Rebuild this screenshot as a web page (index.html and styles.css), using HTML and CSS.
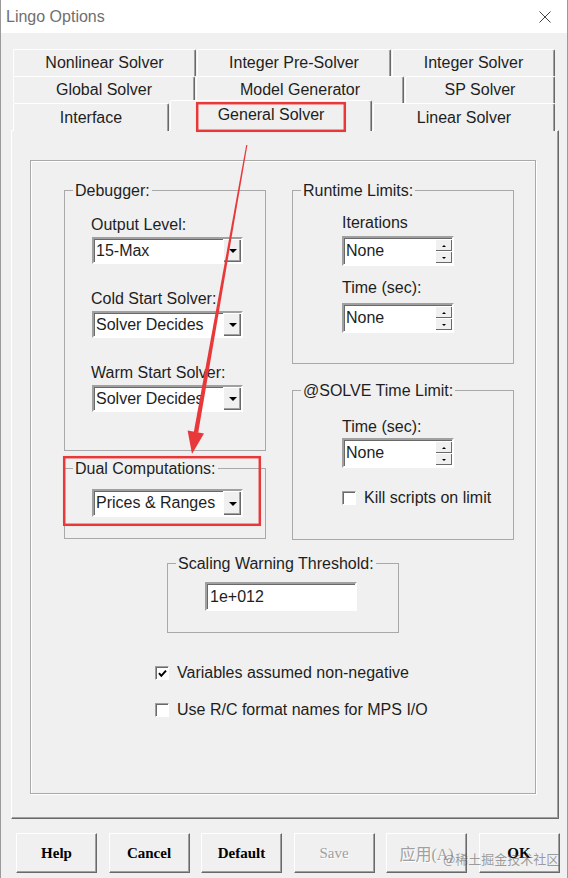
FILE: index.html
```html
<!DOCTYPE html>
<html lang="en">
<head>
    <meta charset="UTF-8">
    <meta name="viewport" content="width=device-width, initial-scale=1.0">
    <title>Lingo Options</title>
    <link rel="stylesheet" href="styles.css">
</head>
<body>

<div class="dialog">
    <div class="titlebar">
        <span class="title">Lingo Options</span>
        <svg class="close" width="12" height="12" viewBox="0 0 12 12">
            <path d="M0.5 0.5L11.5 11.5M11.5 0.5L0.5 11.5" stroke="#444" stroke-width="1" fill="none"/>
        </svg>
    </div>

    <div class="tabs">
        <div class="tab-row row1">
            <div class="tab">Nonlinear Solver</div>
            <div class="tab">Integer Pre-Solver</div>
            <div class="tab">Integer Solver</div>
        </div>
        <div class="tab-row row2">
            <div class="tab">Global Solver</div>
            <div class="tab">Model Generator</div>
            <div class="tab">SP Solver</div>
        </div>
        <div class="tab-row row3">
            <div class="tab">Interface</div>
            <div class="tab active">General Solver</div>
            <div class="tab">Linear Solver</div>
        </div>
    </div>

    <div class="panel">
        <div class="frame">
            <div class="columns">
                <div class="col">
                    <fieldset class="group debugger">
                        <legend>Debugger:</legend>
                        <div class="dbg-item">
                            <span class="label">Output Level:</span>
                            <div class="combo"><span class="combo-text">15-Max</span><span class="combo-btn"><i class="tri-down"></i></span></div>
                        </div>
                        <div class="dbg-item">
                            <span class="label">Cold Start Solver:</span>
                            <div class="combo"><span class="combo-text">Solver Decides</span><span class="combo-btn"><i class="tri-down"></i></span></div>
                        </div>
                        <div class="dbg-item">
                            <span class="label">Warm Start Solver:</span>
                            <div class="combo"><span class="combo-text">Solver Decides</span><span class="combo-btn"><i class="tri-down"></i></span></div>
                        </div>
                    </fieldset>

                    <fieldset class="group dual">
                        <legend>Dual Computations:</legend>
                        <div class="combo"><span class="combo-text">Prices &amp; Ranges</span><span class="combo-btn"><i class="tri-down"></i></span></div>
                    </fieldset>
                </div>

                <div class="col">
                    <fieldset class="group runtime">
                        <legend>Runtime Limits:</legend>
                        <span class="label">Iterations</span>
                        <div class="spin first">
                            <span class="spin-text">None</span>
                            <span class="spin-btns"><span class="spin-btn"><i class="tri-up-s"></i></span><span class="spin-btn"><i class="tri-down-s"></i></span></span>
                        </div>
                        <span class="label gap">Time (sec):</span>
                        <div class="spin second">
                            <span class="spin-text">None</span>
                            <span class="spin-btns"><span class="spin-btn"><i class="tri-up-s"></i></span><span class="spin-btn"><i class="tri-down-s"></i></span></span>
                        </div>
                    </fieldset>

                    <fieldset class="group solve">
                        <legend>@SOLVE Time Limit:</legend>
                        <span class="label">Time (sec):</span>
                        <div class="spin tight">
                            <span class="spin-text">None</span>
                            <span class="spin-btns"><span class="spin-btn"><i class="tri-up-s"></i></span><span class="spin-btn"><i class="tri-down-s"></i></span></span>
                        </div>
                        <div class="check-row kill">
                            <span class="check"></span>
                            <span>Kill scripts on limit</span>
                        </div>
                    </fieldset>
                </div>
            </div>

            <fieldset class="group scaling">
                <legend>Scaling Warning Threshold:</legend>
                <div class="textbox">1e+012</div>
            </fieldset>

            <div class="check-row opt first-opt">
                <span class="check checked">
                    <svg width="11" height="11" viewBox="0 0 11 11"><path d="M2 5.2L4.3 7.8L9 2.6" stroke="#000" stroke-width="2" fill="none"/></svg>
                </span>
                <span>Variables assumed non-negative</span>
            </div>
            <div class="check-row opt">
                <span class="check"></span>
                <span>Use R/C format names for MPS I/O</span>
            </div>
        </div>
    </div>

    <div class="buttons">
        <button class="btn">Help</button>
        <button class="btn">Cancel</button>
        <button class="btn">Default</button>
        <button class="btn disabled">Save</button>
        <button class="btn disabled cjk">应用(A)</button>
        <button class="btn">OK</button>
    </div>

    <!-- annotations drawn on top of the screenshot -->
    <svg class="annot" width="568" height="878" viewBox="0 0 568 878">
        <rect x="197.2" y="103.2" width="147.6" height="27.6" fill="none" stroke="#e8383a" stroke-width="2.5"/>
        <rect x="64.2" y="457.2" width="195.6" height="67.6" fill="none" stroke="#e8383a" stroke-width="2.5"/>
        <polygon points="247.4,145 246.2,145 193.8,432 198.2,432.8" fill="#e8383a"/>
        <polygon points="187.6,430.6 204,433.6 192,454" fill="#e8383a"/>
    </svg>
    <div class="watermark">@稀土掘金技术社区</div>
</div>

</body>
</html>
```

FILE: styles.css
```css
* {
    box-sizing: border-box;
}

body {
    margin: 0;
    background: #f0f0f0;
    font-family: "Liberation Sans", Arial, sans-serif;
    font-size: 16px;
    color: #1e1e1e;
}

.dialog {
    position: relative;
    width: 568px;
    height: 878px;
    background: #f0f0f0;
    border-left: 1px solid #9a9a9a;
    border-right: 1px solid #9a9a9a;
    overflow: hidden;
}

/* title bar */
.titlebar {
    height: 33px;
    background: #fff;
    display: flex;
    align-items: center;
    justify-content: space-between;
    padding: 0 16px 0 5px;
}

.title {
    color: #6f6f6f;
}

/* tabs */
.tabs {
    padding: 16px 0 0 12px;
}

.tab-row {
    display: grid;
    column-gap: 1px;
    height: 27px;
}

.row1 { grid-template-columns: 183px 194px 163px; }
.row2 { grid-template-columns: 182px 208px 150px; }
.row3 { grid-template-columns: 156px 202px 182px; }

.tab {
    display: flex;
    align-items: center;
    justify-content: center;
    background: #f0f0f0;
    border-top: 1px solid #fff;
    border-left: 1px solid #fff;
    border-right: 1px solid #696969;
    box-shadow: inset -1px 0 #a0a0a0;
    border-radius: 2px 2px 0 0;
}

.tab.active {
    position: relative;
    z-index: 1;
    height: 31px;
    margin-top: -3px;
    padding-bottom: 3px;
}

/* tab page */
.panel {
    margin-left: 10px;
    width: 548px;
    height: 689px;
    border-top: 1px solid #fff;
    border-left: 1px solid #fff;
    border-right: 1px solid #696969;
    border-bottom: 1px solid #696969;
    box-shadow: inset -1px -1px #a0a0a0;
    padding: 29px 0 0 18px;
}

.frame {
    width: 506px;
    height: 634px;
    border: 1px solid #a9a9a9;
    box-shadow: inset 1px 1px #fff, 1px 1px #fff;
    padding: 19px 0 0 33px;
}

.columns {
    display: grid;
    grid-template-columns: 202px 222px;
    column-gap: 26px;
    align-items: start;
}

.col {
    display: flex;
    flex-direction: column;
}

.group {
    margin: 0;
    min-width: 0;
    padding: 0 0 0 8px;
    border: 1px solid #a9a9a9;
}

.group legend {
    padding: 0 2px;
    line-height: 21px;
}

.label {
    display: block;
    line-height: 20px;
}

.debugger {
    height: 271px;
    padding-top: 14px;
}

.dbg-item {
    margin-left: 18px;
}

.dbg-item + .dbg-item {
    margin-top: 25px;
}

.dbg-item .combo {
    margin: 2px 0 0 1px;
}

.dual {
    height: 81px;
    margin-top: 7px;
    padding-top: 10px;
}

.dual .combo {
    margin-left: 19px;
    height: 28px;
}

.runtime {
    height: 184px;
    padding-top: 12px;
}

.solve {
    height: 160px;
    margin-top: 16px;
    padding-top: 16px;
}

.runtime .label,
.solve .label,
.runtime .spin,
.solve .spin,
.solve .check-row {
    margin-left: 41px;
}

.spin.first { margin-top: 3px; }
.label.gap { margin-top: 12px; }
.spin.second { margin-top: 5px; }
.spin.tight { margin-top: 1px; }
.check-row.kill { margin-top: 20px; }

/* combo box */
.combo {
    display: flex;
    width: 151px;
    height: 27px;
    background: #fff;
    border: 2px solid;
    border-color: #a0a0a0 #fff #fff #a0a0a0;
    box-shadow: inset 1px 1px #696969;
}

.combo-text {
    flex: 1;
    padding-left: 2px;
    line-height: 23px;
    white-space: nowrap;
    overflow: hidden;
}

.combo-btn {
    width: 18px;
    display: flex;
    align-items: center;
    justify-content: center;
    background: #f0f0f0;
    border-top: 1px solid #fff;
    border-left: 1px solid #fff;
    box-shadow: inset -1px -1px #696969, inset -2px -2px #a0a0a0;
}

.tri-down {
    width: 0;
    height: 0;
    border-left: 4px solid transparent;
    border-right: 4px solid transparent;
    border-top: 4px solid #000;
}

/* spin box */
.spin {
    display: flex;
    width: 112px;
    height: 30px;
    background: #fff;
    border: 2px solid;
    border-color: #a0a0a0 #fff #fff #a0a0a0;
    box-shadow: inset 1px 1px #696969;
}

.spin-text {
    flex: 1;
    padding-left: 2px;
    line-height: 26px;
}

.spin-btns {
    width: 17px;
    display: flex;
    flex-direction: column;
    padding: 1px 0;
}

.spin-btn {
    flex: 1;
    display: flex;
    align-items: center;
    justify-content: center;
    background: #f0f0f0;
    border-top: 1px solid #fff;
    border-left: 1px solid #fff;
    box-shadow: inset -1px -1px #696969;
}

.tri-up-s {
    width: 0;
    height: 0;
    border-left: 2px solid transparent;
    border-right: 2px solid transparent;
    border-bottom: 2px solid #000;
}

.tri-down-s {
    width: 0;
    height: 0;
    border-left: 2px solid transparent;
    border-right: 2px solid transparent;
    border-top: 2px solid #000;
}

/* scaling threshold */
.scaling {
    width: 232px;
    height: 80px;
    margin-top: 13px;
    margin-left: 103px;
    padding-top: 8px;
}

.textbox {
    width: 152px;
    height: 29px;
    margin-left: 29px;
    background: #fff;
    border: 2px solid;
    border-color: #a0a0a0 #fff #fff #a0a0a0;
    box-shadow: inset 1px 1px #696969;
    padding-left: 3px;
    line-height: 25px;
}

/* check boxes */
.check-row {
    display: flex;
    align-items: center;
    gap: 8px;
    height: 20px;
}

.check {
    width: 14px;
    height: 14px;
    background: #fff;
    border: 1px solid;
    border-color: #a0a0a0 #fff #fff #a0a0a0;
    box-shadow: inset 1px 1px #696969;
    display: flex;
    align-items: center;
    justify-content: center;
}

.check svg {
    display: block;
}

.opt {
    margin-left: 91px;
    gap: 8px;
}

.first-opt {
    margin-top: 30px;
}

.opt + .opt {
    margin-top: 17px;
}

/* bottom buttons */
.buttons {
    display: flex;
    gap: 11.5px;
    padding-left: 15px;
    margin-top: 14px;
}

.btn {
    width: 81px;
    height: 40px;
    padding: 0;
    background: #f0f0f0;
    border: 1px solid;
    border-color: #fff #696969 #696969 #fff;
    box-shadow: inset -1px -1px #a0a0a0;
    font-family: "Liberation Serif", "Times New Roman", serif;
    font-weight: bold;
    font-size: 15px;
    color: #000;
}

.btn.disabled {
    color: #a0a0a0;
    font-weight: normal;
    text-shadow: 1px 1px #fff;
}

.btn.cjk {
    font-family: "Liberation Serif", "Noto Sans CJK SC", serif;
    font-size: 16px;
}

/* overlays */
.annot {
    position: absolute;
    z-index: 2;
    top: 0;
    left: -1px;
    pointer-events: none;
}

.watermark {
    position: absolute;
    z-index: 2;
    left: 442px;
    top: 849px;
    font-family: "Noto Sans CJK SC", sans-serif;
    font-size: 13px;
    color: rgba(80, 80, 80, 0.55);
}
```
